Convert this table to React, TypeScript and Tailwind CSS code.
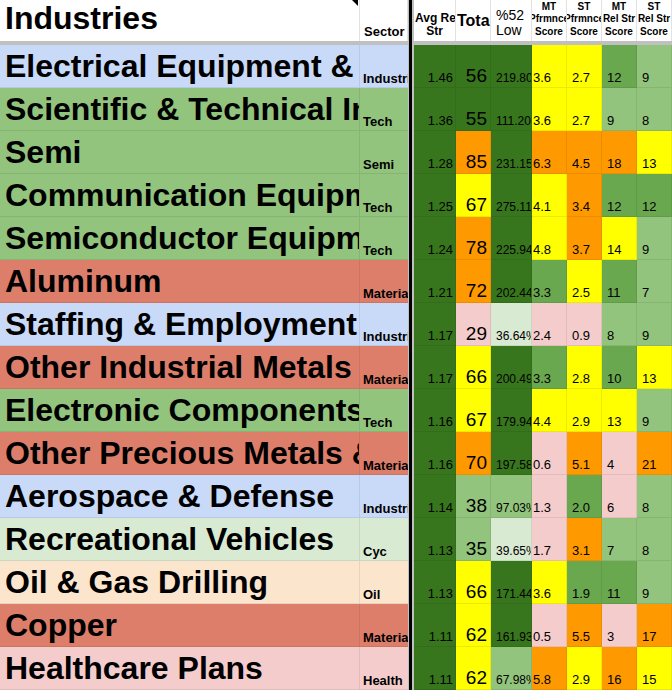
import type { ReactNode } from "react";

type Fill = "dk" | "md" | "lt" | "pale" | "y" | "o" | "p";
type Band = "blue" | "green" | "red" | "pale" | "peach" | "pink";
type Cell = [string, Fill];

type Row = {
  name: string;
  band: Band;
  sector: string;
  avg: string;
  total: Cell;
  low: Cell;
  mtPf: Cell;
  stPf: Cell;
  mtRel: Cell;
  stRel: Cell;
};

const FILL: Record<Fill, string> = {
  dk: "bg-[#38761d]",
  md: "bg-[#6aa84f]",
  lt: "bg-[#93c47d]",
  pale: "bg-[#d9ead3]",
  y: "bg-[#ffff00]",
  o: "bg-[#ff9900]",
  p: "bg-[#f4cccc]",
};

const BAND: Record<Band, string> = {
  blue: "bg-[#c9daf8]",
  green: "bg-[#93c47d]",
  red: "bg-[#dd7e6b]",
  pale: "bg-[#d9ead3]",
  peach: "bg-[#fce5cd]",
  pink: "bg-[#f4cccc]",
};

const ROWS: Row[] = [
  { name: "Electrical Equipment & Parts", band: "blue", sector: "Industrials", avg: "1.46", total: ["56", "dk"], low: ["219.80%", "dk"], mtPf: ["3.6", "y"], stPf: ["2.7", "y"], mtRel: ["12", "md"], stRel: ["9", "lt"] },
  { name: "Scientific & Technical Instruments", band: "green", sector: "Tech", avg: "1.36", total: ["55", "dk"], low: ["111.20%", "dk"], mtPf: ["3.6", "y"], stPf: ["2.7", "y"], mtRel: ["9", "lt"], stRel: ["8", "lt"] },
  { name: "Semi", band: "green", sector: "Semi", avg: "1.28", total: ["85", "o"], low: ["231.15%", "dk"], mtPf: ["6.3", "o"], stPf: ["4.5", "o"], mtRel: ["18", "o"], stRel: ["13", "y"] },
  { name: "Communication Equipment", band: "green", sector: "Tech", avg: "1.25", total: ["67", "y"], low: ["275.11%", "dk"], mtPf: ["4.1", "y"], stPf: ["3.4", "o"], mtRel: ["12", "md"], stRel: ["12", "md"] },
  { name: "Semiconductor Equipment & Materials", band: "green", sector: "Tech", avg: "1.24", total: ["78", "o"], low: ["225.94%", "dk"], mtPf: ["4.8", "y"], stPf: ["3.7", "o"], mtRel: ["14", "y"], stRel: ["9", "lt"] },
  { name: "Aluminum", band: "red", sector: "Materials", avg: "1.21", total: ["72", "o"], low: ["202.44%", "dk"], mtPf: ["3.3", "md"], stPf: ["2.5", "y"], mtRel: ["11", "md"], stRel: ["7", "lt"] },
  { name: "Staffing & Employment Services", band: "blue", sector: "Industrials", avg: "1.17", total: ["29", "p"], low: ["36.64%", "pale"], mtPf: ["2.4", "p"], stPf: ["0.9", "p"], mtRel: ["8", "lt"], stRel: ["9", "lt"] },
  { name: "Other Industrial Metals", band: "red", sector: "Materials", avg: "1.17", total: ["66", "y"], low: ["200.49%", "dk"], mtPf: ["3.3", "md"], stPf: ["2.8", "y"], mtRel: ["10", "md"], stRel: ["13", "y"] },
  { name: "Electronic Components", band: "green", sector: "Tech", avg: "1.16", total: ["67", "y"], low: ["179.94%", "dk"], mtPf: ["4.4", "y"], stPf: ["2.9", "y"], mtRel: ["13", "y"], stRel: ["9", "lt"] },
  { name: "Other Precious Metals & Mining", band: "red", sector: "Materials", avg: "1.16", total: ["70", "o"], low: ["197.58%", "dk"], mtPf: ["0.6", "p"], stPf: ["5.1", "o"], mtRel: ["4", "p"], stRel: ["21", "o"] },
  { name: "Aerospace & Defense", band: "blue", sector: "Industrials", avg: "1.14", total: ["38", "lt"], low: ["97.03%", "lt"], mtPf: ["1.3", "p"], stPf: ["2.0", "md"], mtRel: ["6", "p"], stRel: ["8", "lt"] },
  { name: "Recreational Vehicles", band: "pale", sector: "Cyc", avg: "1.13", total: ["35", "lt"], low: ["39.65%", "pale"], mtPf: ["1.7", "p"], stPf: ["3.1", "o"], mtRel: ["7", "lt"], stRel: ["8", "lt"] },
  { name: "Oil & Gas Drilling", band: "peach", sector: "Oil", avg: "1.13", total: ["66", "y"], low: ["171.44%", "dk"], mtPf: ["3.6", "y"], stPf: ["1.9", "md"], mtRel: ["11", "md"], stRel: ["9", "lt"] },
  { name: "Copper", band: "red", sector: "Materials", avg: "1.11", total: ["62", "y"], low: ["161.93%", "dk"], mtPf: ["0.5", "p"], stPf: ["5.5", "o"], mtRel: ["3", "p"], stRel: ["17", "o"] },
  { name: "Healthcare Plans", band: "pink", sector: "Health", avg: "1.11", total: ["62", "y"], low: ["67.98%", "lt"], mtPf: ["5.8", "o"], stPf: ["2.9", "y"], mtRel: ["16", "o"], stRel: ["15", "y"] },
];

const GRID = "grid grid-cols-[360px_48px_6px_42px_35px_41px_35px_35px_35px_35px]";

// frozen-column divider: thin gray, black, gray
function Divider() {
  return (
    <div className="flex h-full">
      <div className="w-px bg-[#c0c0c0]" />
      <div className="w-[3px] bg-black" />
      <div className="w-[2px] bg-[#c0c0c0]" />
    </div>
  );
}

function ScoreHead({ top, mid }: { top: string; mid: string }) {
  return (
    <div className="flex flex-col items-stretch justify-end overflow-hidden border-r border-[#e2e2e2] pb-[3px] text-[10px] font-bold leading-[12.5px]">
      <div className="flex justify-center whitespace-nowrap">{top}</div>
      <div className="flex justify-center whitespace-nowrap">{mid}</div>
      <div className="flex justify-center whitespace-nowrap">Score</div>
    </div>
  );
}

function Header() {
  return (
    <div className={`${GRID} h-[41px] bg-white`}>
      <div className="relative flex items-end overflow-hidden border-r border-[#e2e2e2] pb-[7px] pl-[5px] text-[32px] font-bold leading-none">
        Industries
        <div className="absolute right-[1px] top-0 h-0 w-0 border-l-[6px] border-t-[6px] border-l-transparent border-t-black" />
      </div>
      <div className="flex items-end overflow-hidden border-r border-[#e2e2e2] pb-[3px] pl-[4px] text-[13px] font-bold leading-none">
        Sector
      </div>
      <Divider />
      <div className="flex flex-col justify-end overflow-hidden border-r border-[#e2e2e2] pb-[3px] text-[12px] font-bold leading-[13px]">
        <div className="whitespace-nowrap pl-px">Avg Rel</div>
        <div className="text-center">Str</div>
      </div>
      <div className="flex items-center overflow-hidden whitespace-nowrap border-r border-[#e2e2e2] pl-px text-[16px] font-bold leading-none">
        Total
      </div>
      <div className="flex flex-col justify-end overflow-hidden border-r border-[#e2e2e2] pb-[4px] pl-[5px] text-[14px] leading-[14.5px]">
        <div>%52</div>
        <div>Low</div>
      </div>
      <ScoreHead top="MT" mid="Pfrmnce" />
      <ScoreHead top="ST" mid="Pfrmnce" />
      <ScoreHead top="MT" mid="Rel Str" />
      <ScoreHead top="ST" mid="Rel Str" />
    </div>
  );
}

function Num({ cell, className }: { cell: Cell; className: string }) {
  return (
    <div className={`flex items-end overflow-hidden whitespace-nowrap border-b border-r border-black/[0.08] leading-none ${FILL[cell[1]]} ${className}`}>
      {cell[0]}
    </div>
  );
}

function DataRow({ row }: { row: Row }): ReactNode {
  const band = BAND[row.band];
  return (
    <div className={`${GRID} h-[43px]`}>
      <div className={`flex items-end overflow-hidden whitespace-nowrap border-b border-r border-black/[0.08] pb-[5px] pl-[5px] text-[32px] font-bold leading-none ${band}`}>
        {row.name}
      </div>
      <div className={`flex items-end overflow-hidden whitespace-nowrap border-b border-black/[0.08] pb-[2px] pl-[3px] text-[13px] font-bold leading-none ${band}`}>
        {row.sector}
      </div>
      <Divider />
      <Num cell={[row.avg, "dk"]} className="justify-end pb-[3px] pr-[2px] text-[13px]" />
      <Num cell={row.total} className="justify-end pb-[2px] pr-[3px] text-[19px]" />
      <Num cell={row.low} className="pb-[3px] pl-[5px] text-[12px]" />
      <Num cell={row.mtPf} className="pb-[3px] pl-px text-[13px]" />
      <Num cell={row.stPf} className="pb-[3px] pl-[5px] text-[13px]" />
      <Num cell={row.mtRel} className="pb-[3px] pl-[5px] text-[13px]" />
      <Num cell={row.stRel} className="pb-[3px] pl-[5px] text-[13px]" />
    </div>
  );
}

export default function App() {
  return (
    <div className="h-[690px] w-[672px] overflow-hidden bg-white font-['Liberation_Sans',Arial,sans-serif] text-black">
      <Header />
      <div className={`${GRID} h-[4px] bg-[#c0c0c0]`}>
        <div />
        <div />
        <Divider />
      </div>
      {ROWS.map((r) => (
        <DataRow key={r.name} row={r} />
      ))}
    </div>
  );
}
